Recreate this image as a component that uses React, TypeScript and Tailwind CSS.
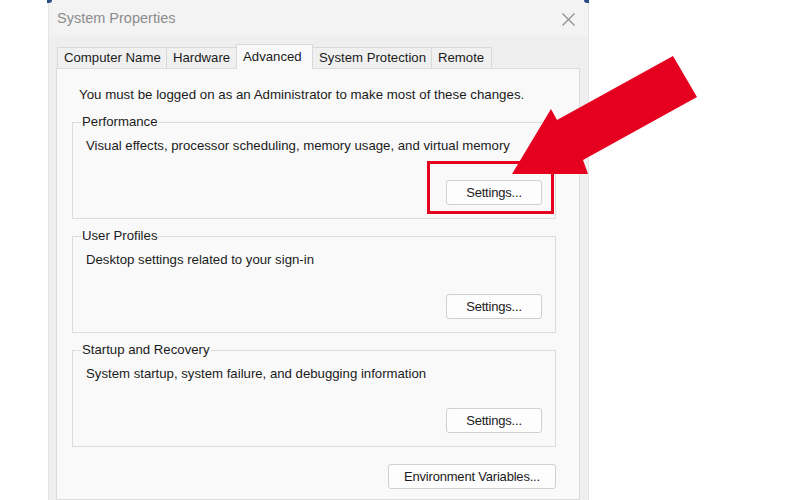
import React from "react";

const font = { fontFamily: '"Liberation Sans", Arial, sans-serif' };

function Btn({ label, w }: { label: string; w: string }) {
  return (
    <div
      className={`${w} h-[25px] flex items-center justify-center rounded-[3px] border border-[#d0d0d0] bg-[#fdfdfd] text-[13px] text-[#1b1b1b] tracking-[-0.2px]`}
    >
      {label}
    </div>
  );
}

function Group({ title, desc, className = "" }: { title: string; desc: string; className?: string }) {
  return (
    <div className={`relative w-[484px] h-[97px] border border-[#dcdcdc] flex flex-col ${className}`}>
      <span className="absolute -top-[9px] left-[8px] px-[1px] bg-[#f9f9f9] text-[13.2px] leading-[16px] text-[#1b1b1b]">
        {title}
      </span>
      <div className="pt-[15px] pl-[13px] text-[13.2px] leading-[16px] text-[#1b1b1b]">{desc}</div>
      <div className="mt-auto mb-[13px] mr-[13px] self-end">
        <Btn label="Settings..." w="w-[96px]" />
      </div>
    </div>
  );
}

const tabs = [
  { n: "Computer Name", w: "w-[110px]" },
  { n: "Hardware", w: "w-[71px]" },
  { n: "Advanced", w: "w-[77px]", sel: true },
  { n: "System Protection", w: "w-[120px]" },
  { n: "Remote", w: "w-[61px]" },
];

export default function App() {
  return (
    <div className="relative w-[800px] h-[500px] bg-white overflow-hidden flex" style={font}>
      <div className="ml-[48px] w-[541px] h-full bg-[#efefef] border-x border-[#e4e4e4] flex flex-col">
        <div className="h-[36px] bg-[#f3f3f3] flex items-center justify-between pl-[8px] pr-[13px] pt-[2px]">
          <span className="text-[14.5px] text-[#8c8c8c]">System Properties</span>
          <svg width="13" height="13" viewBox="0 0 13 13">
            <path d="M0.5 0.5 L12.5 12.5 M12.5 0.5 L0.5 12.5" stroke="#8e8e8e" strokeWidth="1.2" fill="none" />
          </svg>
        </div>
        <div className="mt-[8px] ml-[8px] h-[24px] flex items-end">
          {tabs.map((t) =>
            t.sel ? (
              <div
                key={t.n}
                className={`${t.w} relative z-10 h-[25px] -mb-px -ml-px flex items-start pt-[2px] pl-[6px] border border-b-0 border-[#d9d9d9] bg-[#f9f9f9] text-[13.2px] text-[#1b1b1b]`}
              >
                {t.n}
              </div>
            ) : (
              <div
                key={t.n}
                className={`${t.w} h-[21px] -ml-px first:ml-0 flex items-center pl-[6px] border border-b-0 border-[#d9d9d9] bg-[#f0f0f0] text-[13.2px] text-[#1b1b1b]`}
              >
                {t.n}
              </div>
            )
          )}
        </div>
        <div className="ml-[7px] w-[524px] flex-1 border border-[#dcdcdc] bg-[#f9f9f9] px-[15px] flex flex-col">
          <div className="pt-[18px] pl-[7px] text-[13.3px] leading-[16px] text-[#1b1b1b]">
            You must be logged on as an Administrator to make most of these changes.
          </div>
          <Group
            className="mt-[19px]"
            title="Performance"
            desc="Visual effects, processor scheduling, memory usage, and virtual memory"
          />
          <Group className="mt-[17px]" title="User Profiles" desc="Desktop settings related to your sign-in" />
          <Group
            className="mt-[17px]"
            title="Startup and Recovery"
            desc="System startup, system failure, and debugging information"
          />
          <div className="w-[484px] mt-[17px] flex justify-end">
            <Btn label="Environment Variables..." w="w-[168px]" />
          </div>
        </div>
      </div>

      {/* small dark corner fragments */}
      <div className="absolute left-[47px] top-0 w-[5px] h-[3px] bg-[#2c4a86] rounded-br-[3px]" />
      <div className="absolute left-[584px] top-0 w-[5px] h-[3px] bg-[#2c4a86] rounded-bl-[3px]" />

      {/* red highlight box */}
      <div className="absolute left-[427px] top-[161px] w-[127px] h-[53px] border-[3px] border-[#e5001f]" />

      {/* red arrow */}
      <svg className="absolute left-0 top-0 pointer-events-none" width="800" height="500" viewBox="0 0 800 500">
        <polygon
          points="512,174 551,109 557,120 673,56 697,97 583,160 588,174"
          fill="#e6001f"
        />
      </svg>
    </div>
  );
}
